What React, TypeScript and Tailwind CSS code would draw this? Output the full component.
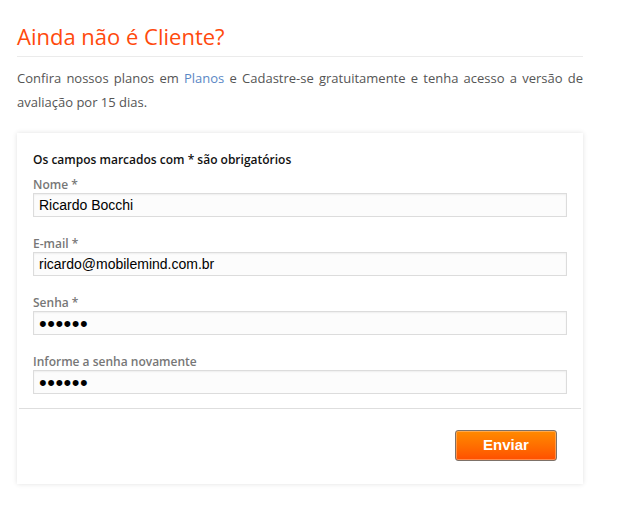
import React from 'react';

const fields = [
  { label: 'Nome *', value: 'Ricardo Bocchi', type: 'text' },
  { label: 'E-mail *', value: 'ricardo@mobilemind.com.br', type: 'text' },
  { label: 'Senha *', value: 'secret', type: 'password' },
  { label: 'Informe a senha novamente', value: 'secret', type: 'password' },
];

export default function App() {
  return (
    <div className="min-h-screen bg-white px-[17px] pt-[20px] font-['Open_Sans',sans-serif]">
      <h1 className="text-[22px] leading-[32px] text-[#ff4a0d] font-normal">Ainda não é Cliente?</h1>
      <div className="mt-[4px] w-[566px] border-t border-[#ebebeb]"></div>

      <p className="mt-[9px] w-[566px] text-[13px] leading-[24px] text-[#555] text-justify">
        Confira nossos planos em <a className="text-[#5a87c5]">Planos</a> e Cadastre-se gratuitamente e tenha acesso a versão de avaliação por 15 dias.
      </p>

      {/* Form Panel */}
      <div className="mt-[19px] w-[566px] bg-white shadow-[0_0_5px_rgba(0,0,0,0.12)]">
        <div className="px-[16px] pt-[18px] pb-[14px]">
          <p className="text-[12px] leading-[18px] font-semibold text-[#111]">Os campos marcados com * são obrigatórios</p>
          <div className="mt-[8px] flex flex-col gap-[19px]">
            {fields.map(f => (
              <div key={f.label}>
                <label className="block text-[12px] leading-[16px] font-semibold text-[#777]">{f.label}</label>
                <input
                  type={f.type}
                  defaultValue={f.value}
                  className={`block w-[534px] h-[24px] px-[5px] border border-[#dcdcdc] bg-[#fcfcfc] shadow-[inset_0_1px_2px_rgba(0,0,0,0.06)] text-black font-['Liberation_Sans',Arial,sans-serif] outline-none ${f.type === 'password' ? 'text-[22px] tracking-[0.5px]' : 'text-[14px]'}`}
                />
              </div>
            ))}
          </div>
        </div>
        <div className="mx-[2px] border-t border-[#dedede]"></div>
        <div className="flex justify-end pr-[26px] pt-[21px] pb-[23px]">
          <button className="w-[102px] h-[31px] rounded-[3px] border border-[#7d7168] bg-gradient-to-b from-[#ff8a00] to-[#ff4e00] text-white font-bold text-[15px] font-['Liberation_Sans',Arial,sans-serif] shadow-[inset_0_0_0_1px_rgba(255,200,150,0.5)]">
            Enviar
          </button>
        </div>
      </div>
    </div>
  );
}
